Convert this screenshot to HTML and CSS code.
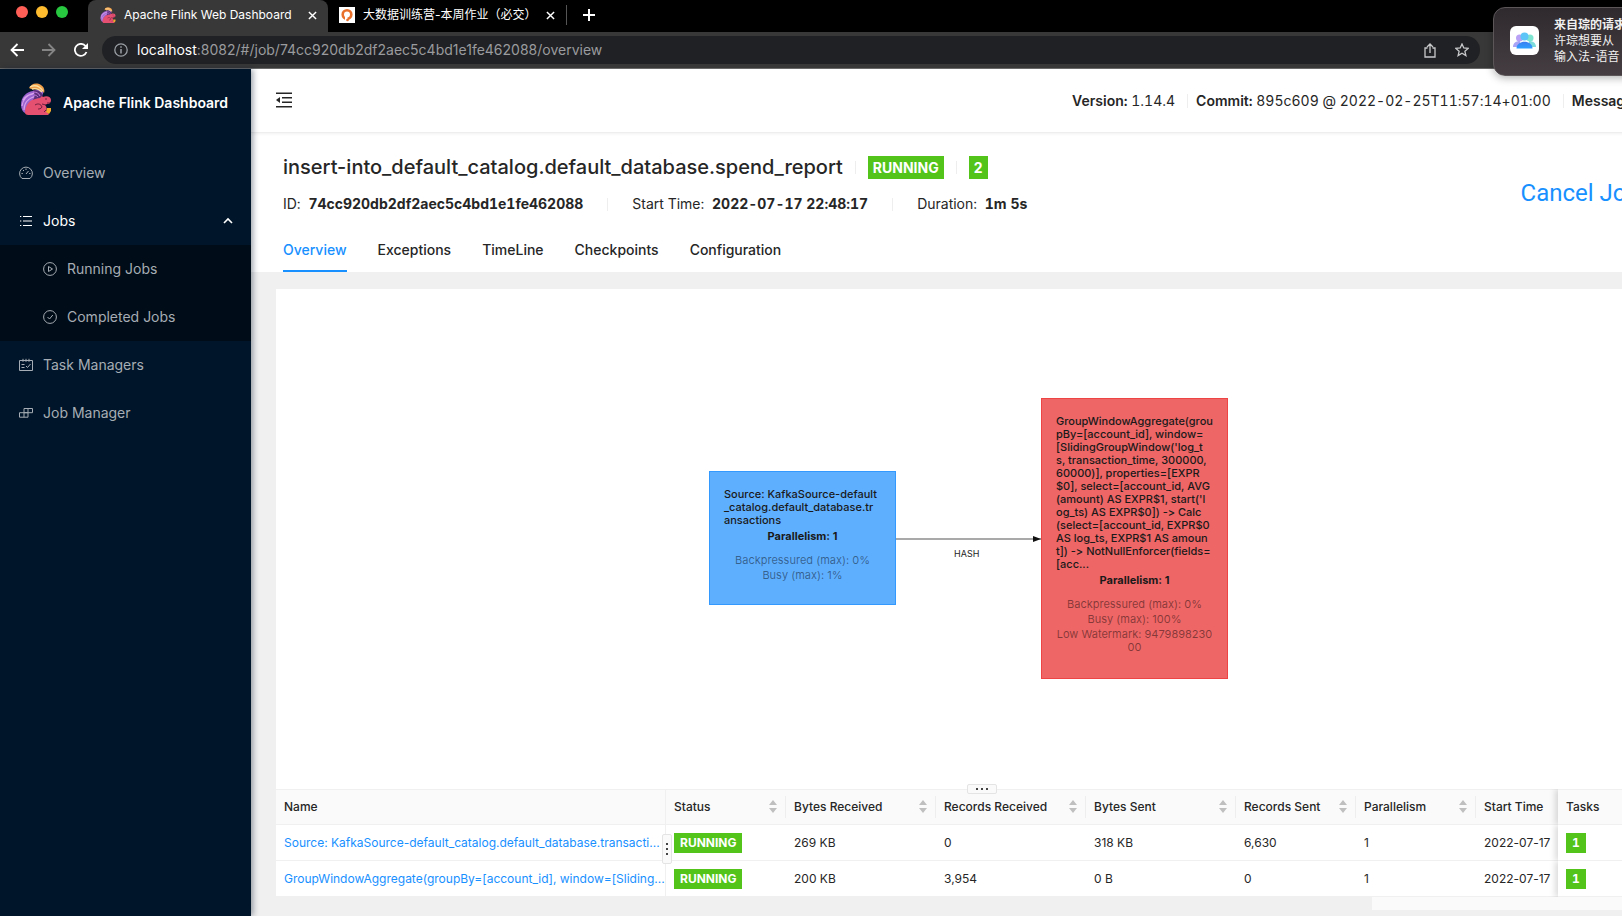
FILE: index.html
```html
<!DOCTYPE html>
<html lang="en">
<head>
<meta charset="utf-8">
<title>Apache Flink Web Dashboard</title>
<link rel="stylesheet" href="styles.css">
</head>
<body>
<svg class="defs" width="0" height="0" aria-hidden="true">
  <symbol id="flink" viewBox="0 0 32 32">
    <path d="M1 22C1 14 6 9 13 8c5-1 7-3 8-5 3 4 3 8 0 11-4 4-9 5-11 9-1 3-2 5-5 7-2-1-4-4-4-8z" fill="#9a62cf"/>
    <path d="M2 23c1-7 5-11 11-12M4 27c0-8 5-12 12-14M3 17c3-5 8-6 12-7" fill="none" stroke="#d6a2ec" stroke-width="1.200"/>
    <path d="M5 30c0-8 5-14 13-15l2-1 1-2 2 2c4-2 8 0 8 3 0 2-1 4-4 4l-2 1c2 2 2 4 1 6l3 3-1 1H8c-1 0-3-1-3-2z" fill="#e54f70"/>
    <path d="M9 5c2-4 7-6 12-3 3 2 4 5 3 8-2-3-5-4-7-4-3 0-5 1-8-1z" fill="#f2a04a"/>
    <path d="M10 4c4-2 9-2 13 4M12 6c4-1 7 0 10 3" fill="none" stroke="#fce0a0" stroke-width="1.300"/>
    <path d="M13 7c4 0 8 1 10 5l-3 3c-3 0-5 1-7 2 2-3 2-6 0-10z" fill="#5c2f7a"/>
    <path d="M13 9c3 0 6 1 7 4M14 12c2 0 3 1 4 2" fill="none" stroke="#bf7be0" stroke-width="1"/>
    <path d="M15 22c3-2 6-1 7 2-1 2-3 2-4 2M22 21l4 1M26 15v2M27 20h3M24 29l2-2" fill="none" stroke="#6e2340" stroke-width="1"/>
    <path d="M27 25h4v3l-2 3-3-2z" fill="#f3a92c"/>
  </symbol>
  <symbol id="close" viewBox="0 0 10 10"><path d="M1 1l8 8M9 1L1 9" stroke="#fff" stroke-width="1.6" fill="none"/></symbol>
  <symbol id="sort" viewBox="0 0 8 14"><path d="M4 0l4 5H0zM4 13l4-5H0z" fill="#bfbfbf"/></symbol>
</svg>

<div class="browser">
  <div class="tabstrip">
    <div class="lights"><span class="light red"></span><span class="light amber"></span><span class="light green"></span></div>
    <div class="tab active">
      <svg class="favicon"><use href="#flink"/></svg>
      <span class="tab-title">Apache Flink Web Dashboard</span>
      <button class="plain" aria-label="Close tab"><svg width="9" height="9"><use href="#close"/></svg></button>
    </div>
    <div class="tab">
      <svg class="favicon" viewBox="0 0 16 16"><path d="M0 0h16v16H0z" fill="#fff"/><circle cx="8" cy="7.500" r="4.300" fill="none" stroke="#e8702a" stroke-width="2.600"/><path d="M6 8.500h2.500V14H6z" fill="#fff"/><circle cx="8.500" cy="13" r="1.300" fill="#e8702a"/></svg>
      <span class="tab-title">大数据训练营-本周作业（必交）</span>
      <button class="plain" aria-label="Close tab"><svg width="9" height="9"><use href="#close"/></svg></button>
    </div>
    <button class="plain new-tab" aria-label="New tab"><svg width="12" height="12" viewBox="0 0 12 12"><path d="M6 0v12M0 6h12" stroke="#fff" stroke-width="2"/></svg></button>
  </div>
  <div class="toolbar">
    <button class="plain" aria-label="Back"><svg width="14" height="14" viewBox="0 0 14 14"><path d="M14 7H1.500M7.500 1l-6 6 6 6" fill="none" stroke="#fff" stroke-width="1.800"/></svg></button>
    <button class="plain" aria-label="Forward"><svg width="14" height="14" viewBox="0 0 14 14"><path d="M0 7h12.500M6.500 1l6 6-6 6" fill="none" stroke="#858585" stroke-width="1.800"/></svg></button>
    <button class="plain" aria-label="Reload"><svg width="14" height="14" viewBox="0 0 14 14"><path d="M12.500 9A6 6 0 1 1 11.500 3L13 5" fill="none" stroke="#fff" stroke-width="1.800"/><path d="M14 0v6H8z" fill="#fff"/></svg></button>
    <div class="omnibox">
      <svg width="14" height="14" viewBox="0 0 14 14"><circle cx="7" cy="7" r="6.200" fill="none" stroke="#9aa0a6" stroke-width="1.300"/><path d="M7 6v4.500M7 3.300v1.500" stroke="#9aa0a6" stroke-width="1.500"/></svg>
      <span class="url"><b>localhost</b>:8082/#/job/74cc920db2df2aec5c4bd1e1fe462088/overview</span>
      <button class="plain" aria-label="Share"><svg width="12" height="15" viewBox="0 0 12 15"><path d="M3.500 5H1v9h10V5H8.500M6 10V1.200M3 4l3-3 3 3" fill="none" stroke="#c8c9cb" stroke-width="1.300"/></svg></button>
      <button class="plain" aria-label="Bookmark"><svg width="14" height="14" viewBox="0 0 14 14"><path d="M7 1l1.800 4 4.400.4-3.300 2.900 1 4.300L7 10.300l-3.900 2.300 1-4.300L.8 5.400 5.200 5z" fill="none" stroke="#c8c9cb" stroke-width="1.300"/></svg></button>
    </div>
  </div>
</div>

<div class="app">
  <aside class="sidebar">
    <div class="brand"><svg width="32" height="32"><use href="#flink"/></svg><strong>Apache Flink Dashboard</strong></div>
    <nav>
      <a class="item" href="#overview"><svg viewBox="0 0 14 14"><path d="M3 12.500a6.400 6.400 0 1 1 8 0z" fill="none" stroke="currentColor"/><path d="M7 8l2.500-3M7 2.500V4M2.500 7.500h1.300M10.200 7.500h1.300M4 4l1 1" stroke="currentColor" fill="none"/></svg>Overview</a>
      <a class="item open" href="#jobs"><svg viewBox="0 0 14 14"><path d="M4 2.500h9M4 7h9M4 11.500h9M1 2.500h1.300M1 7h1.300M1 11.500h1.300" stroke="currentColor" stroke-width="1.200"/></svg>Jobs<svg class="caret" viewBox="0 0 10 10"><path d="M1 7l4-4 4 4" fill="none" stroke="currentColor" stroke-width="1.600"/></svg></a>
      <div class="submenu">
        <a class="item" href="#running"><svg viewBox="0 0 14 14"><circle cx="7" cy="7" r="6.400" fill="none" stroke="currentColor"/><path d="M5.500 4.500v5l4-2.500z" fill="none" stroke="currentColor"/></svg>Running Jobs</a>
        <a class="item" href="#completed"><svg viewBox="0 0 14 14"><circle cx="7" cy="7" r="6.400" fill="none" stroke="currentColor"/><path d="M4.500 7l2 2 3.300-4" fill="none" stroke="currentColor"/></svg>Completed Jobs</a>
      </div>
      <a class="item" href="#task-managers"><svg viewBox="0 0 14 14"><path d="M.5 2.500h13v10H.5zM4 .8v3M7 .8v3M10 .8v3M2.500 6.500h3M2.500 9.500h3M7 8l1.500 1.500 3-3.500" fill="none" stroke="currentColor"/></svg>Task Managers</a>
      <a class="item" href="#job-manager"><svg viewBox="0 0 14 14"><path d="M5 2.500h8.500v4.200H5zM.5 6.700h8.500v4.500H.5zM9 2.500v4.200M5 6.700v4.500" fill="none" stroke="currentColor"/></svg>Job Manager</a>
    </nav>
  </aside>

  <main class="main">
    <header class="topbar">
      <button class="plain" aria-label="Collapse menu"><svg width="16" height="16" viewBox="0 0 16 16"><path d="M0 1.200h16M6 5.700h10M6 10.300h10M0 14.800h16" stroke="#262626" stroke-width="1.400"/><path d="M4 5v6L0 8z" fill="#262626"/></svg></button>
      <div class="build">
        <span><b>Version:</b> 1.14.4</span>
        <span><b>Commit:</b> 895c609 @ 2022-02-25T11:57:14+01:00</span>
        <span><b>Message:</b> 0</span>
      </div>
    </header>

    <section class="job">
      <div class="job-head">
        <div>
          <div class="title-row">
            <h1>insert-into_default_catalog.default_database.spend_report</h1>
            <i class="rule"></i><span class="tag big">RUNNING</span><i class="rule"></i><span class="tag big">2</span>
          </div>
          <div class="meta">
            <span>ID: <b>74cc920db2df2aec5c4bd1e1fe462088</b></span>
            <i class="rule"></i>
            <span>Start Time: <b>2022-07-17 22:48:17</b></span>
            <i class="rule"></i>
            <span>Duration: <b>1m 5s</b></span>
          </div>
        </div>
        <a class="cancel" href="#cancel">Cancel Job</a>
      </div>
      <nav class="tabs">
        <a class="current" href="#tab-overview">Overview</a>
        <a href="#exceptions">Exceptions</a>
        <a href="#timeline">TimeLine</a>
        <a href="#checkpoints">Checkpoints</a>
        <a href="#configuration">Configuration</a>
      </nav>
    </section>

    <section class="panel">
      <div class="graph">
        <svg class="edge" width="146" height="10" viewBox="0 0 146 10"><path d="M0 5h146" stroke="#8c8c8c" stroke-width="1.500"/><path d="M137 2l8 3-8 3z" fill="#111"/></svg>
        <span class="edge-label">HASH</span>
        <div class="node source">
          <div class="node-name">Source: KafkaSource-default<br>_catalog.default_database.tr<br>ansactions</div>
          <div class="node-par">Parallelism: 1</div>
          <div class="node-stat">Backpressured (max): 0%</div>
          <div class="node-stat">Busy (max): 1%</div>
        </div>
        <div class="node sink">
          <div class="node-name">GroupWindowAggregate(grou<br>pBy=[account_id], window=<br>[SlidingGroupWindow('log_t<br>s, transaction_time, 300000,<br>60000)], properties=[EXPR<br>$0], select=[account_id, AVG<br>(amount) AS EXPR$1, start('l<br>og_ts) AS EXPR$0]) -&gt; Calc<br>(select=[account_id, EXPR$0<br>AS log_ts, EXPR$1 AS amoun<br>t]) -&gt; NotNullEnforcer(fields=<br>[acc...</div>
          <div class="node-par">Parallelism: 1</div>
          <div class="node-stat">Backpressured (max): 0%</div>
          <div class="node-stat">Busy (max): 100%</div>
          <div class="node-stat">Low Watermark: 9479898230<br>00</div>
        </div>
      </div>

      <div class="vertices">
        <button class="grip wide" aria-label="Resize list"><svg width="12" height="2" viewBox="0 0 12 2"><path d="M0 0h2v2H0zM5 0h2v2H5zM10 0h2v2h-2z" fill="#444"/></svg></button>
        <button class="grip tall" aria-label="Resize name column"><svg width="2" height="12" viewBox="0 0 2 12"><path d="M0 0h2v2H0zM0 5h2v2H0zM0 10h2v2H0z" fill="#444"/></svg></button>
        <table>
          <colgroup><col class="c-name"><col class="c-120"><col class="c-150"><col class="c-150"><col class="c-150"><col class="c-120"><col class="c-120"><col class="c-start"><col></colgroup>
          <thead><tr>
            <th>Name</th>
            <th><div>Status<svg><use href="#sort"/></svg></div></th>
            <th><div>Bytes Received<svg><use href="#sort"/></svg></div></th>
            <th><div>Records Received<svg><use href="#sort"/></svg></div></th>
            <th><div>Bytes Sent<svg><use href="#sort"/></svg></div></th>
            <th><div>Records Sent<svg><use href="#sort"/></svg></div></th>
            <th><div>Parallelism<svg><use href="#sort"/></svg></div></th>
            <th>Start Time</th>
            <th class="fixed">Tasks</th>
          </tr></thead>
          <tbody>
            <tr><td><a href="#v1">Source: KafkaSource-default_catalog.default_database.transacti...</a></td><td><span class="tag">RUNNING</span></td><td>269 KB</td><td>0</td><td>318 KB</td><td>6,630</td><td>1</td><td>2022-07-17</td><td class="fixed"><span class="tag">1</span></td></tr>
            <tr><td><a href="#v2">GroupWindowAggregate(groupBy=[account_id], window=[Sliding...</a></td><td><span class="tag">RUNNING</span></td><td>200 KB</td><td>3,954</td><td>0 B</td><td>0</td><td>1</td><td>2022-07-17</td><td class="fixed"><span class="tag">1</span></td></tr>
          </tbody>
        </table>
        <div class="scrollbar"><span></span></div>
      </div>
    </section>
  </main>
</div>

<div class="notice" role="status">
  <svg width="29" height="29" viewBox="0 0 29 29"><defs><linearGradient id="nb" x2="0" y2="1"><stop stop-color="#3d7df0"/><stop offset="1" stop-color="#2fa0ff"/></linearGradient></defs><rect width="29" height="29" rx="6" fill="#fff"/><circle cx="9.500" cy="12" r="3.500" fill="#b9a2f5"/><circle cx="20" cy="12" r="3.500" fill="#7ee6d0"/><path d="M3 21c0-4 3-6 7-6v6z" fill="#a9a4f5"/><path d="M26 21c0-4-3-6-7-6v6z" fill="#7fdcdc"/><circle cx="14.500" cy="10.500" r="4" fill="#5cc4f7"/><path d="M6.500 22.500c0-9 16-9 16 0z" fill="url(#nb)"/></svg>
  <div><strong>来自琮的请求</strong><br>许琮想要从<br>输入法-语音</div>
</div>
</body>
</html>
```
FILE: styles.css
```css
* { box-sizing: border-box; }
html { height: 100%; }
body {
  margin: 0;
  height: 100%;
  display: flex;
  flex-direction: column;
  overflow: hidden;
  position: relative;
  font: 14px/22px Inter, "Noto Sans CJK SC", sans-serif;
  font-feature-settings: "calt" 0;
  color: #262626;
  background: #f0f0f0;
}
a { color: inherit; text-decoration: none; }
b, strong { font-weight: 600; }
.defs { position: absolute; }
.plain { display: flex; padding: 0; border: 0; background: none; cursor: pointer; }

/* Browser chrome */
.browser { background: #383838; border-bottom: 1px solid #6a6a6a; flex: none; }
.tabstrip { display: flex; height: 32px; background: #000; }
.lights { display: flex; gap: 8px; width: 88px; padding: 6px 0 0 16px; }
.light { width: 12px; height: 12px; border-radius: 50%; }
.red { background: #ff5f57; }
.amber { background: #febc2e; }
.green { background: #28c840; }
.tab { display: flex; align-items: center; padding: 0 11px 2px; width: 238px; color: #fff; font-size: 12px; }
.tab .plain { margin-left: auto; }
.tab.active { width: 240px; padding-left: 12px; background: #383838; border-radius: 8px 8px 0 0; }
.favicon { width: 16px; height: 16px; margin-right: 8px; }
.new-tab { align-items: center; margin: 5px 0; padding: 0 16px; border-left: 1px solid #555; height: 20px; }
.toolbar { display: flex; align-items: center; gap: 18px; height: 36px; padding: 0 142px 0 10px; }
.omnibox { flex: 1; display: flex; align-items: center; gap: 19px; height: 28px; margin-left: -4px; padding: 0 11px 0 12px; border-radius: 14px; background: #202124; }
.url { flex: 1; margin-left: -10px; color: #9a9b9e; font-size: 14px; }
.url b { color: #fff; font-weight: 400; }

/* Layout */
.app { flex: 1; display: flex; min-height: 0; width: calc(100% + 48px); }
.sidebar { position: relative; z-index: 2; flex: none; width: 251px; background: #001529; box-shadow: 2px 0 6px rgba(0, 21, 41, .4); color: #a6adb4; }
.brand { display: flex; align-items: flex-end; gap: 11px; height: 46px; padding-left: 20px; color: #fff; }
.brand strong { line-height: 24px; }
.sidebar nav { padding-top: 34px; }
.item { display: flex; align-items: center; gap: 10px; height: 48px; padding: 0 18px 0 19px; }
.item svg { width: 14px; height: 14px; }
.item .caret { width: 10px; height: 10px; margin-left: auto; }
.open { color: #fff; }
.submenu { background: #000c17; }
.submenu .item { padding-left: 43px; }
.main { flex: 1; min-width: 0; display: flex; flex-direction: column; }
.topbar { display: flex; align-items: center; justify-content: space-between; height: 64px; padding: 0 20px 2px 25px; background: #fff; border-bottom: 1px solid #eee; box-shadow: 0 1px 3px rgba(0, 21, 41, .06); z-index: 1; }
.build { display: flex; padding-top: 2px; font-variant-numeric: tabular-nums; }
.build span + span { margin-left: 12px; padding-left: 8px; border-left: 1px solid #eee; }
.build span { line-height: 14px; white-space: nowrap; }

/* Job header */
.job { padding: 20px 30px 0 32px; background: #fff; }
.job-head { display: flex; justify-content: space-between; align-items: flex-end; }
.title-row { display: flex; align-items: center; height: 28px; }
h1 { margin: 0; font-size: 20px; font-weight: 500; line-height: 28px; white-space: nowrap; }
.rule { width: 1px; height: 13px; margin: 0 12px; background: #eee; }
.tag { display: inline-block; height: 20px; padding: 0 6px; background: #52c41a; color: #fff; font-size: 12px; font-weight: 700; line-height: 20px; }
.tag.big { height: 23px; padding: 0 5px; font-size: 14px; line-height: 23px; }
.meta { display: flex; align-items: center; margin-top: 12px; font-variant-numeric: tabular-nums; }
.meta .rule { margin: 0 24px; }
.meta b { margin-left: 4px; font-weight: 700; }
.cancel { padding-bottom: 6px; color: #1890ff; font-family: Roboto, sans-serif; font-size: 24px; line-height: 32px; white-space: nowrap; }
.tabs { display: flex; gap: 31px; margin-top: 12px; }
.tabs a { padding: 12px 0 9px; font-weight: 500; border-bottom: 2px solid transparent; }
.tabs .current { color: #1890ff; border-color: #1890ff; }

/* Job graph */
.panel { margin: 17px 24px 0 25px; }
.graph { position: relative; height: 500px; background: #fff; }
.node { position: absolute; width: 187px; padding: 16px 14px; border: 1px solid; font-size: 11px; line-height: 13px; white-space: nowrap; color: #1a1a1a; }
.source { left: 433px; top: 182px; height: 134px; background: #5fafff; border-color: #3399ff; }
.sink { left: 765px; top: 109px; height: 281px; background: #ee6666; border-color: #ee4444; }
.node-name { font-weight: 500; }
.node-par { margin: 3px 0 11px; font-weight: 700; text-align: center; }
.node-stat { margin-top: 2px; text-align: center; color: rgba(0, 0, 0, .45); }
.edge { position: absolute; left: 620px; top: 245px; }
.edge-label { position: absolute; left: 678px; top: 258px; font-size: 9px; line-height: 14px; }

/* Vertex table */
.vertices { position: relative; }
table { width: 100%; table-layout: fixed; border-collapse: separate; border-spacing: 0; background: #fff; font-size: 12px; }
.c-name { width: 390px; }
.c-120 { width: 120px; }
.c-150 { width: 150px; }
.c-start { width: 82px; }
th, td { height: 36px; padding: 0 8px; text-align: left; white-space: nowrap; overflow: hidden; border-bottom: 1px solid #f0f0f0; }
th { background: #fafafa; font-weight: 500; border-top: 1px solid #f0f0f0; }
th div { display: flex; justify-content: space-between; align-items: center; margin-right: -8px; padding-right: 8px; border-right: 1px solid #eee; }
th svg { width: 8px; height: 14px; }
td:first-child, th:first-child { padding-right: 0; border-right: 1px solid #f0f0f0; }
td a { color: #1890ff; }
.fixed { position: relative; overflow: visible; box-shadow: -3px 0 6px rgba(0, 0, 0, .14); clip-path: inset(0 0 0 -10px); }
.fixed .tag { font-variant-numeric: tabular-nums; }
td:nth-child(8) { padding-right: 0; }
.grip { position: absolute; display: flex; align-items: center; justify-content: center; padding: 0; background: #fafafa; border: 1px solid #e4e4e4; border-radius: 2px; z-index: 1; }
.wide { left: 691px; top: -5px; width: 30px; height: 10px; }
.tall { left: 386px; top: 45px; width: 10px; height: 30px; }
.scrollbar { display: flex; justify-content: flex-end; }
.scrollbar span { width: 20%; height: 13px; background: #fafafa; }

/* Desktop notification */
.notice { position: absolute; z-index: 5; left: calc(100% - 129px); top: 7px; width: 340px; height: 69px; display: flex; align-items: center; gap: 15px; padding: 0 0 2px 16px; border: 1px solid #5c5659; border-radius: 12px; background: linear-gradient(#2f2a2e, #453d41); box-shadow: 0 2px 8px rgba(0, 0, 0, .3); color: #f0f0f0; font-size: 12px; line-height: 16px; }
```
